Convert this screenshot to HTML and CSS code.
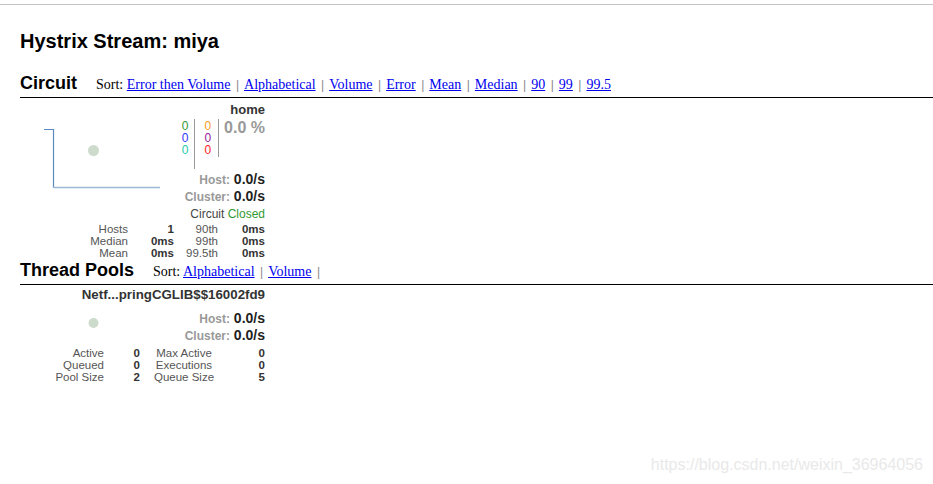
FILE: index.html
```html
<!DOCTYPE html>
<html lang="en">
<head>
    <meta charset="UTF-8">
    <title>Hystrix Monitor</title>
    <link rel="stylesheet" href="styles.css">
</head>
<body>
    <div class="topbar"></div>

    <div class="page">
        <h2 class="title">Hystrix Stream: miya</h2>

        <!-- Circuits -->
        <div class="menubar">
            <div class="menubar-title">Circuit</div>
            <div class="sort">
                Sort: <a href="#">Error then Volume</a><span class="sep">|</span><a href="#">Alphabetical</a><span class="sep">|</span><a href="#">Volume</a><span class="sep">|</span><a href="#">Error</a><span class="sep">|</span><a href="#">Mean</a><span class="sep">|</span><a href="#">Median</a><span class="sep">|</span><a href="#">90</a><span class="sep">|</span><a href="#">99</a><span class="sep">|</span><a href="#">99.5</a>
            </div>
        </div>

        <div class="monitor circuit">
            <div class="name">home</div>
            <div class="monitor-body">
                <div class="chart">
                    <svg width="155" height="80" viewBox="0 0 155 80">
                        <line x1="24" y1="12.5" x2="34" y2="12.5" stroke="#5b8ac0" stroke-width="1"/>
                        <line x1="33.5" y1="12" x2="33.5" y2="71" stroke="#5b8ac0" stroke-width="1.2"/>
                        <line x1="33" y1="70.5" x2="140" y2="70.5" stroke="#9cbad8" stroke-width="1.4"/>
                        <circle cx="73.5" cy="33.5" r="5.5" fill="#cddbcd"/>
                    </svg>
                </div>
                <div class="stats">
                    <div class="counters">
                        <div class="col col-a">
                            <div class="success">0</div>
                            <div class="short">0</div>
                            <div class="bad">0</div>
                        </div>
                        <div class="col col-b">
                            <div class="timeout">0</div>
                            <div class="rejected">0</div>
                            <div class="failure">0</div>
                        </div>
                        <div class="percent">0.0 %</div>
                    </div>
                    <div class="rate host-rate"><span class="rate-label">Host:</span> 0.0/s</div>
                    <div class="rate"><span class="rate-label">Cluster:</span> 0.0/s</div>
                    <div class="status">Circuit <span class="closed">Closed</span></div>
                </div>
            </div>
            <div class="table circuit-table">
                <div class="lbl">Hosts</div><div class="val">1</div><div class="lbl">90th</div><div class="val">0ms</div>
                <div class="lbl">Median</div><div class="val">0ms</div><div class="lbl">99th</div><div class="val">0ms</div>
                <div class="lbl">Mean</div><div class="val">0ms</div><div class="lbl">99.5th</div><div class="val">0ms</div>
            </div>
        </div>

        <!-- Thread pools -->
        <div class="menubar pools-bar">
            <div class="menubar-title">Thread Pools</div>
            <div class="sort">
                Sort: <a href="#">Alphabetical</a><span class="sep">|</span><a href="#">Volume</a><span class="sep">|</span>
            </div>
        </div>

        <div class="monitor pool">
            <div class="name">Netf...pringCGLIB$$16002fd9</div>
            <div class="monitor-body">
                <div class="chart">
                    <svg width="155" height="40" viewBox="0 0 155 40">
                        <circle cx="73.5" cy="21" r="5" fill="#cddbcd"/>
                    </svg>
                </div>
                <div class="stats">
                    <div class="rate host-rate"><span class="rate-label">Host:</span> 0.0/s</div>
                    <div class="rate"><span class="rate-label">Cluster:</span> 0.0/s</div>
                </div>
            </div>
            <div class="table pool-table">
                <div class="lbl">Active</div><div class="val">0</div><div class="lbl mid">Max Active</div><div class="val">0</div>
                <div class="lbl">Queued</div><div class="val">0</div><div class="lbl mid">Executions</div><div class="val">0</div>
                <div class="lbl">Pool Size</div><div class="val">2</div><div class="lbl mid">Queue Size</div><div class="val">5</div>
            </div>
        </div>
    </div>

    <div class="watermark">https://blog.csdn.net/weixin_36964056</div>
</body>
</html>
```

FILE: styles.css
```css
* {
    margin: 0;
    padding: 0;
    box-sizing: border-box;
}

body {
    font-family: 'Liberation Sans', Arial, sans-serif;
    background-color: #fff;
    color: #333;
    width: 933px;
    height: 484px;
    overflow: hidden;
}

.topbar {
    height: 5px;
    border-bottom: 1px solid #c4c4c4;
}

.page {
    padding-left: 20px;
}

.title {
    margin-top: 24px;
    font-size: 20px;
    line-height: 24px;
    font-weight: bold;
    color: #000;
}

/* Barra de secciones */
.menubar {
    display: flex;
    align-items: baseline;
    margin-top: 19px;
    padding-bottom: 3px;
    border-bottom: 1px solid #000;
}

.menubar-title {
    font-size: 18px;
    line-height: 22px;
    font-weight: bold;
    color: #000;
    margin-right: 19px;
}

.sort {
    font-family: 'Liberation Serif', 'Times New Roman', serif;
    font-size: 14px;
    color: #000;
}

.sort a {
    color: #0000ee;
}

.sep {
    color: #888;
    margin: 0 5px 0 5.5px;
    font-family: 'Liberation Sans', Arial, sans-serif;
    font-size: 12px;
}

.pools-bar {
    margin-top: 0;
}

/* Monitores */
.monitor {
    width: 245px;
    padding-top: 5px;
}

.monitor.pool {
    padding-top: 3px;
}

.name {
    text-align: right;
    font-size: 13px;
    line-height: 14px;
    font-weight: bold;
    color: #333;
    white-space: nowrap;
}

.pool .name {
    font-size: 13.3px;
}

.monitor-body {
    display: flex;
}

.chart {
    width: 155px;
    flex-shrink: 0;
}

.chart svg {
    display: block;
}

.stats {
    flex: 1;
    text-align: right;
}

.counters {
    display: flex;
    justify-content: flex-end;
    margin-top: 2px;
    font-size: 12px;
    line-height: 12px;
}

.col {
    text-align: right;
    border-right: 1px solid #999;
}

.col-a {
    padding: 1px 6px 13px 0;
}

.col-b {
    padding: 1px 7px 1px 9px;
    align-self: flex-start;
}

.percent {
    font-size: 16px;
    line-height: 18px;
    font-weight: bold;
    color: #999;
    padding-left: 5px;
}

.success { color: #339933; }
.short { color: #3333ff; }
.bad { color: #22ccaa; }
.timeout { color: #ff9922; }
.rejected { color: #992299; }
.failure { color: #ff2222; }

.rate {
    font-size: 14px;
    line-height: 16px;
    font-weight: bold;
    color: #222;
    white-space: nowrap;
}

.circuit .host-rate {
    margin-top: 2px;
}

.pool .host-rate {
    margin-top: 8px;
}

.rate-label {
    font-size: 12px;
    color: #999;
}

.status {
    font-size: 12px;
    line-height: 18px;
    color: #444;
}

.closed {
    color: #339933;
}

/* Tablas */
.table {
    display: grid;
    font-size: 11.5px;
    line-height: 12px;
    margin-top: 0;
}

.pool .table {
    margin-top: 3px;
}

.circuit-table {
    grid-template-columns: 108px 46px 44px 47px;
}

.pool-table {
    grid-template-columns: 84px 36px 88px 37px;
}

.lbl {
    text-align: right;
    color: #555;
}

.lbl.mid {
    text-align: center;
}

.val {
    text-align: right;
    font-weight: bold;
    color: #333;
}

.watermark {
    position: absolute;
    right: 10px;
    top: 456px;
    font-size: 16px;
    color: #e9e9e9;
}
```
